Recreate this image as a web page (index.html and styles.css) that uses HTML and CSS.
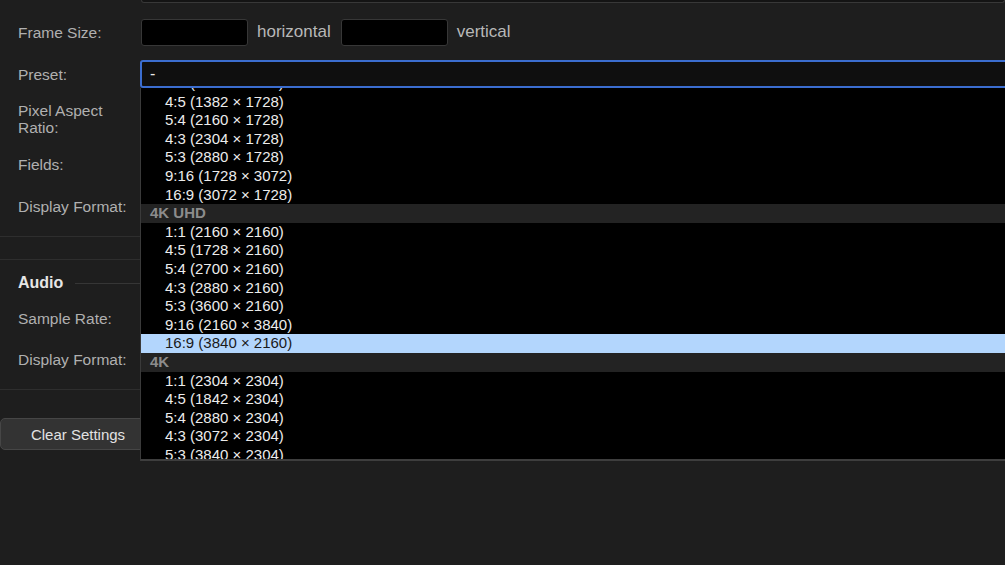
FILE: index.html
```html
<!DOCTYPE html>
<html lang="en">
<head>
    <meta charset="UTF-8">
    <title>Sequence Settings</title>
    <link rel="stylesheet" href="styles.css">
</head>
<body>
    <div class="settings">
        <div class="row top-row">
            <div></div>
            <div class="top-field"></div>
        </div>

        <div class="row frame-row">
            <label>Frame Size:</label>
            <div class="controls">
                <input type="text" class="box">
                <span class="unit">horizontal</span>
                <input type="text" class="box">
                <span class="unit">vertical</span>
            </div>
        </div>

        <div class="row preset-row">
            <label>Preset:</label>
            <div class="select">-</div>
        </div>

        <div class="row pixel-row">
            <label>Pixel Aspect Ratio:</label>
            <div></div>
        </div>

        <div class="row fields-row">
            <label>Fields:</label>
            <div></div>
        </div>

        <div class="row display-row">
            <label>Display Format:</label>
            <div></div>
        </div>

        <div class="rule first-rule"></div>
        <div class="rule second-rule"></div>

        <div class="section-head">
            <h2>Audio</h2>
            <div class="head-line"></div>
        </div>

        <div class="row rate-row">
            <label>Sample Rate:</label>
            <div></div>
        </div>

        <div class="row audio-format-row">
            <label>Display Format:</label>
            <div></div>
        </div>

        <div class="rule third-rule"></div>

        <button class="clear-btn">Clear Settings</button>

        <!-- open preset menu -->
        <div class="menu">
            <div class="menu-scroll">
                <div class="item">1:1 (1728 × 1728)</div>
                <div class="item">4:5 (1382 × 1728)</div>
                <div class="item">5:4 (2160 × 1728)</div>
                <div class="item">4:3 (2304 × 1728)</div>
                <div class="item">5:3 (2880 × 1728)</div>
                <div class="item">9:16 (1728 × 3072)</div>
                <div class="item">16:9 (3072 × 1728)</div>
                <div class="group">4K UHD</div>
                <div class="item">1:1 (2160 × 2160)</div>
                <div class="item">4:5 (1728 × 2160)</div>
                <div class="item">5:4 (2700 × 2160)</div>
                <div class="item">4:3 (2880 × 2160)</div>
                <div class="item">5:3 (3600 × 2160)</div>
                <div class="item">9:16 (2160 × 3840)</div>
                <div class="item selected">16:9 (3840 × 2160)</div>
                <div class="group">4K</div>
                <div class="item">1:1 (2304 × 2304)</div>
                <div class="item">4:5 (1842 × 2304)</div>
                <div class="item">5:4 (2880 × 2304)</div>
                <div class="item">4:3 (3072 × 2304)</div>
                <div class="item">5:3 (3840 × 2304)</div>
                <div class="item">9:16 (2304 × 4096)</div>
            </div>
        </div>
    </div>
</body>
</html>
```

FILE: styles.css
```css
* {
    margin: 0;
    padding: 0;
    box-sizing: border-box;
}

html, body {
    height: 100%;
}

body {
    background: #1e1e1e;
    font-family: 'Liberation Sans', Arial, sans-serif;
    color: #b4b4b4;
    overflow: hidden;
}

.settings {
    position: relative;
    height: 100%;
}

.row {
    display: grid;
    grid-template-columns: 140px 1fr;
    align-items: center;
}

.row label {
    padding-left: 18px;
    padding-right: 8px;
    font-size: 15.5px;
    line-height: 17px;
    color: #b0b0b0;
}

.top-row {
    height: 3px;
    margin-bottom: 8px;
}

.top-field {
    height: 3px;
    margin-left: 1px;
    background: #141414;
    border: 1px solid #383838;
    border-top: none;
    border-radius: 0 0 3px 3px;
}

.frame-row { height: 42px; }
.preset-row { height: 42px; }
.pixel-row { height: 47px; }
.fields-row { height: 44px; }
.display-row { height: 40px; }
.rate-row { height: 36px; }
.audio-format-row { height: 46px; }

.controls {
    display: flex;
    align-items: center;
    gap: 9px;
}

.box {
    width: 107px;
    height: 27px;
    margin-left: 1px;
    background: #000;
    border: 1px solid #373737;
    border-radius: 3px;
    outline: none;
}

.unit {
    font-size: 17px;
    color: #b8b8b8;
}

.select {
    height: 28px;
    margin-right: -8px;
    background: #0f0f0f;
    border: 2px solid #3b6dcf;
    border-radius: 3px;
    padding-left: 8px;
    font-size: 16px;
    line-height: 24px;
    color: #e8e8e8;
}

.rule {
    height: 1px;
    background: #2e2e2e;
}

.first-rule { margin-top: 10px; }
.second-rule { margin-top: 22px; }
.third-rule { margin-top: 7px; }

.section-head {
    display: flex;
    align-items: center;
    height: 34px;
    margin-top: 6px;
    padding-left: 18px;
}

.section-head h2 {
    font-size: 16px;
    font-weight: bold;
    color: #e6e6e6;
}

.head-line {
    flex: 1;
    height: 1px;
    margin-left: 12px;
    background: #363636;
}

.clear-btn {
    display: block;
    width: 156px;
    height: 32px;
    margin-top: 28px;
    background: #333;
    border: 1px solid #464646;
    border-radius: 5px;
    font-family: 'Liberation Sans', Arial, sans-serif;
    font-size: 15px;
    color: #e2e2e2;
}

.menu {
    position: absolute;
    top: 88px;
    left: 140px;
    width: 880px;
    height: 373px;
    background: #000;
    border-left: 1px solid #3a3a3a;
    border-bottom: 2px solid #3e3e3e;
    overflow: hidden;
}

.menu-scroll {
    margin-top: -14px;
}

.item,
.group {
    height: 18.6px;
    line-height: 18.6px;
    font-size: 15px;
    white-space: nowrap;
}

.item {
    padding-left: 24px;
    color: #ececec;
}

.group {
    padding-left: 9px;
    background: #232323;
    font-weight: bold;
    color: #8c8c8c;
}

.item.selected {
    background: #b3d6fd;
    color: #1a1a1a;
}
```
